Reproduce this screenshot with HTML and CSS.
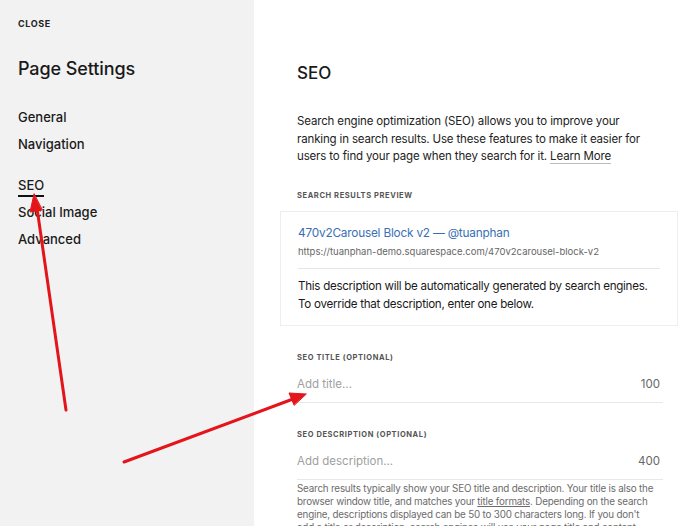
FILE: index.html
```html
<!DOCTYPE html>
<html lang="en">
<head>
    <meta charset="UTF-8">
    <meta name="viewport" content="width=device-width, initial-scale=1.0">
    <title>Page Settings</title>
    <link rel="stylesheet" href="styles.css">
</head>
<body>
    <div class="panel">
        <!-- Left menu -->
        <aside class="sidebar">
            <a class="close" href="#">Close</a>
            <h1>Page Settings</h1>
            <nav class="menu">
                <a href="#">General</a>
                <a href="#">Navigation</a>
            </nav>
            <nav class="menu">
                <a href="#" class="active">SEO</a>
                <a href="#">Social Image</a>
                <a href="#">Advanced</a>
            </nav>
        </aside>

        <!-- SEO settings -->
        <main class="content">
            <h2>SEO</h2>
            <p class="intro">Search engine optimization (SEO) allows you to improve your ranking in search results. Use these features to make it easier for users to find your page when they search for it. <a href="#">Learn More</a></p>

            <div class="label label-preview">Search Results Preview</div>
            <div class="preview">
                <div class="preview-title">470v2Carousel Block v2 — @tuanphan</div>
                <div class="preview-url">https://tuanphan-demo.squarespace.com/470v2carousel-block-v2</div>
                <p class="preview-desc">This description will be automatically generated by search engines. To override that description, enter one below.</p>
            </div>

            <div class="label">SEO Title (Optional)</div>
            <div class="field">
                <input type="text" placeholder="Add title...">
                <span class="count">100</span>
            </div>

            <div class="label">SEO Description (Optional)</div>
            <div class="field field-last">
                <input type="text" placeholder="Add description...">
                <span class="count">400</span>
            </div>
            <p class="help">Search results typically show your SEO title and description. Your title is also the browser window title, and matches your <a href="#">title formats</a>. Depending on the search engine, descriptions displayed can be 50 to 300 characters long. If you don't add&nbsp;a title or description, search engines will use your page title and content.</p>
        </main>

        <!-- annotation arrows drawn on top -->
        <svg class="arrows" width="700" height="526" viewBox="0 0 700 526">
            <g stroke="#e4141b" stroke-width="3" fill="#e4141b" stroke-linecap="round">
                <line x1="66" y1="410" x2="37" y2="208"/>
                <polygon points="34,194 30,212 42,210" stroke-width="1"/>
                <line x1="124" y1="462" x2="293" y2="399"/>
                <polygon points="306,394 289,393 294,405" stroke-width="1"/>
            </g>
        </svg>
    </div>
</body>
</html>
```

FILE: styles.css
```css
body {
    margin: 0;
    font-family: Inter, "Noto Sans", sans-serif;
    color: #1a1a1a;
    background-color: #fff;
}
a {
    color: inherit;
    text-decoration: none;
}
.panel {
    position: relative;
    display: flex;
    width: 700px;
    height: 526px;
    overflow: hidden;
}

/* sidebar */
.sidebar {
    width: 254px;
    flex-shrink: 0;
    background-color: #f2f2f2;
    padding: 18px 18px 0;
    box-sizing: border-box;
}
.close {
    display: block;
    font-size: 9px;
    line-height: 12px;
    font-weight: 700;
    letter-spacing: 0.6px;
    text-transform: uppercase;
    color: #222;
}
.sidebar h1 {
    font-size: 18px;
    line-height: 22px;
    font-weight: 500;
    margin: 28px 0 28.5px;
    letter-spacing: -0.1px;
}
.menu {
    display: flex;
    flex-direction: column;
    align-items: flex-start;
    gap: 10px;
    margin-bottom: 24px;
}
.menu a {
    font-size: 13px;
    font-weight: 500;
    line-height: 17px;
}
.menu a.active {
    border-bottom: 2px solid #111;
    padding-bottom: 1px;
    margin-bottom: -3px;
}

/* main column */
.content {
    flex: 1;
    padding: 62px 37px 0 43px;
}
.content h2 {
    font-size: 17px;
    line-height: 22px;
    font-weight: 500;
    margin: 0 0 29px;
}
.intro {
    max-width: 345px;
    font-size: 11.5px;
    letter-spacing: -0.15px;
    line-height: 17.5px;
    color: #222;
    margin: 0 0 25px;
}
.intro a {
    border-bottom: 1px solid #bbb;
}
.label {
    font-size: 7.5px;
    line-height: 10px;
    font-weight: 700;
    letter-spacing: 0.6px;
    text-transform: uppercase;
    color: #555;
    margin-bottom: 11px;
}
.label-preview {
    margin-bottom: 10px;
}
.preview {
    margin: 0 -15px 27px -17px;
    padding: 12px 17px 12px;
    border: 1px solid #eee;
}
.preview-title {
    font-size: 11.8px;
    letter-spacing: -0.2px;
    color: #3a6fb5;
    line-height: 18px;
}
.preview-url {
    font-size: 9.5px;
    color: #666;
    line-height: 14px;
    margin-top: 3px;
    padding-bottom: 9px;
    border-bottom: 1px solid #e6e6e6;
}
.preview-desc {
    font-size: 11.6px;
    letter-spacing: -0.28px;
    line-height: 17.5px;
    margin: 9.5px 0 0;
}
.field {
    display: flex;
    align-items: center;
    border-bottom: 1px solid #e8e8e8;
    padding-bottom: 8px;
    margin-bottom: 27px;
}
.field-last {
    margin-bottom: 2px;
}
.field input {
    flex: 1;
    border: none;
    outline: none;
    padding: 0;
    height: 20px;
    font-family: inherit;
    font-size: 11.5px;
    background: transparent;
}
.field input::placeholder {
    color: #a0a0a0;
}
.count {
    font-size: 11.5px;
    color: #666;
    margin-right: 3px;
}
.help {
    max-width: 358px;
    font-size: 9.8px;
    letter-spacing: -0.18px;
    line-height: 13px;
    color: #6b6b6b;
    margin: 0;
}
.help a {
    text-decoration: underline;
}

/* overlay arrows */
.arrows {
    position: absolute;
    left: 0;
    top: 0;
    pointer-events: none;
}
```
